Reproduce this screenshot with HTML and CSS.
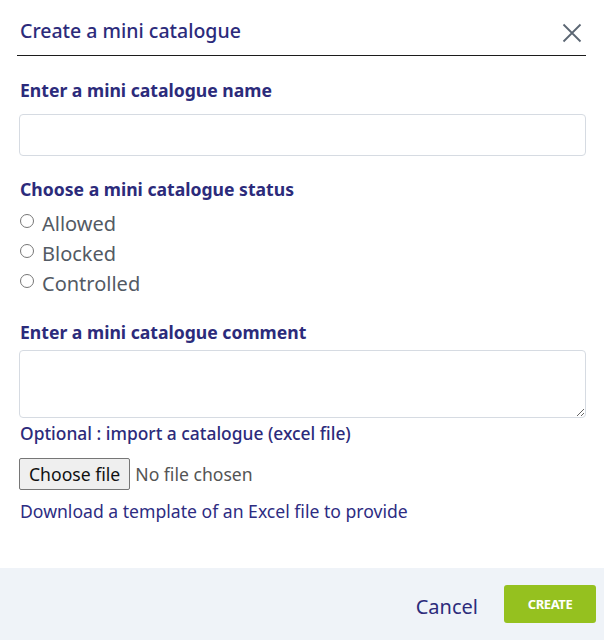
FILE: index.html
```html
<!DOCTYPE html>
<html lang="en">
<head>
<meta charset="utf-8">
<title>Create a mini catalogue</title>
<link rel="stylesheet" href="styles.css">
</head>
<body>
<div class="modal">
  <div class="modal-header">
    <h1 class="modal-title">Create a mini catalogue</h1>
    <button class="close" type="button" aria-label="Close">
      <svg width="20" height="20" viewBox="0 0 20 20"><path d="M1.5 1.5 L18.5 18.5 M18.5 1.5 L1.5 18.5" stroke="#5b6673" stroke-width="1.8" fill="none"/></svg>
    </button>
  </div>
  <div class="modal-body">
    <label class="field-label first">Enter a mini catalogue name</label>
    <input class="text-input" type="text">

    <div class="field-label">Choose a mini catalogue status</div>
    <div class="radios">
      <label class="radio-row"><input type="radio" name="status"><span>Allowed</span></label>
      <label class="radio-row"><input type="radio" name="status"><span>Blocked</span></label>
      <label class="radio-row"><input type="radio" name="status"><span>Controlled</span></label>
    </div>

    <label class="field-label comment">Enter a mini catalogue comment</label>
    <textarea class="text-area"></textarea>

    <div class="optional">Optional : import a catalogue (excel file)</div>
    <div class="file-row">
      <span class="file-btn">Choose file</span><span class="file-none">No file chosen</span>
    </div>
    <a class="download" href="#">Download a template of an Excel file to provide</a>
  </div>
  <div class="modal-footer">
    <a class="cancel" href="#">Cancel</a>
    <button class="create" type="button">CREATE</button>
  </div>
</div>
</body>
</html>
```
FILE: styles.css
```css
html, body {
  margin: 0;
  padding: 0;
  background: #ffffff;
}
body {
  font-family: "Noto Sans", "Open Sans", sans-serif;
  color: #2c2b7b;
}
.modal {
  width: 604px;
  height: 640px;
  display: flex;
  flex-direction: column;
  background: #fff;
}
.modal-header {
  margin: 0 18px 0 17px;
  height: 56px;
  border-bottom: 1px solid #1c1c1c;
  display: flex;
  align-items: center;
  justify-content: space-between;
  box-sizing: border-box;
  padding-top: 7px;
}
.modal-title {
  margin: 0 0 0 3px;
  font-size: 19.5px;
  font-weight: 500;
  line-height: 28px;
  color: #2c2b7b;
}
.close {
  border: 0;
  background: none;
  padding: 0;
  margin: 3px 4px 0 0;
  width: 20px;
  height: 20px;
  display: flex;
}
.modal-body {
  padding: 0 18px 0 19px;
  display: flex;
  flex-direction: column;
  align-items: flex-start;
  flex: 1;
}
.field-label {
  display: block;
  font-size: 17.6px;
  font-weight: 700;
  line-height: 24px;
  margin: 21px 0 0 1px;
  color: #2c2b7b;
}
.field-label.first {
  margin-top: 22px;
}
.field-label.comment {
  margin-top: 22px;
}
.text-input {
  margin-top: 12px;
  width: 100%;
  height: 42px;
  box-sizing: border-box;
  border: 1px solid #d6dbe2;
  border-radius: 4px;
  font-family: inherit;
  font-size: 16px;
  padding: 0 12px;
}
.radios {
  margin-top: 7px;
  display: flex;
  flex-direction: column;
}
.radio-row {
  display: flex;
  align-items: center;
  height: 30px;
  font-size: 20px;
  color: #535a64;
}
.radio-row input {
  margin: 0 8px 4px 1px;
  width: 14px;
  height: 14px;
}
.text-area {
  margin-top: 6px;
  width: 100%;
  height: 68px;
  box-sizing: border-box;
  border: 1px solid #d6dbe2;
  border-radius: 4px;
  font-family: inherit;
  font-size: 16px;
  padding: 6px 12px;
  resize: vertical;
}
.optional {
  margin: 3px 0 0 1px;
  font-size: 17.4px;
  font-weight: 500;
  line-height: 24px;
  color: #2c2b7b;
}
.file-row {
  margin-top: 13px;
  display: flex;
  align-items: center;
  font-size: 17.6px;
}
.file-btn {
  display: inline-flex;
  align-items: center;
  height: 32px;
  box-sizing: border-box;
  padding: 0 9px;
  background: #efefef;
  border: 1px solid #767676;
  border-radius: 2px;
  color: #111;
}
.file-none {
  margin-left: 5px;
  color: #545454;
}
.download {
  margin: 9px 0 0 1px;
  font-size: 17.6px;
  line-height: 24px;
  color: #2d2c82;
  text-decoration: none;
}
.modal-footer {
  height: 72px;
  background: #eff3f8;
  display: flex;
  align-items: center;
  justify-content: flex-end;
  padding-right: 8px;
  gap: 26px;
}
.cancel {
  font-size: 20px;
  color: #2c2b7b;
  text-decoration: none;
  line-height: 24px;
  margin-top: 5px;
}
.create {
  width: 92px;
  height: 38px;
  border: 0;
  border-radius: 3px;
  background: #95c11f;
  color: #fff;
  font-family: "Noto Sans", sans-serif;
  font-weight: 700;
  font-size: 13px;
  letter-spacing: -0.4px;
}
```
